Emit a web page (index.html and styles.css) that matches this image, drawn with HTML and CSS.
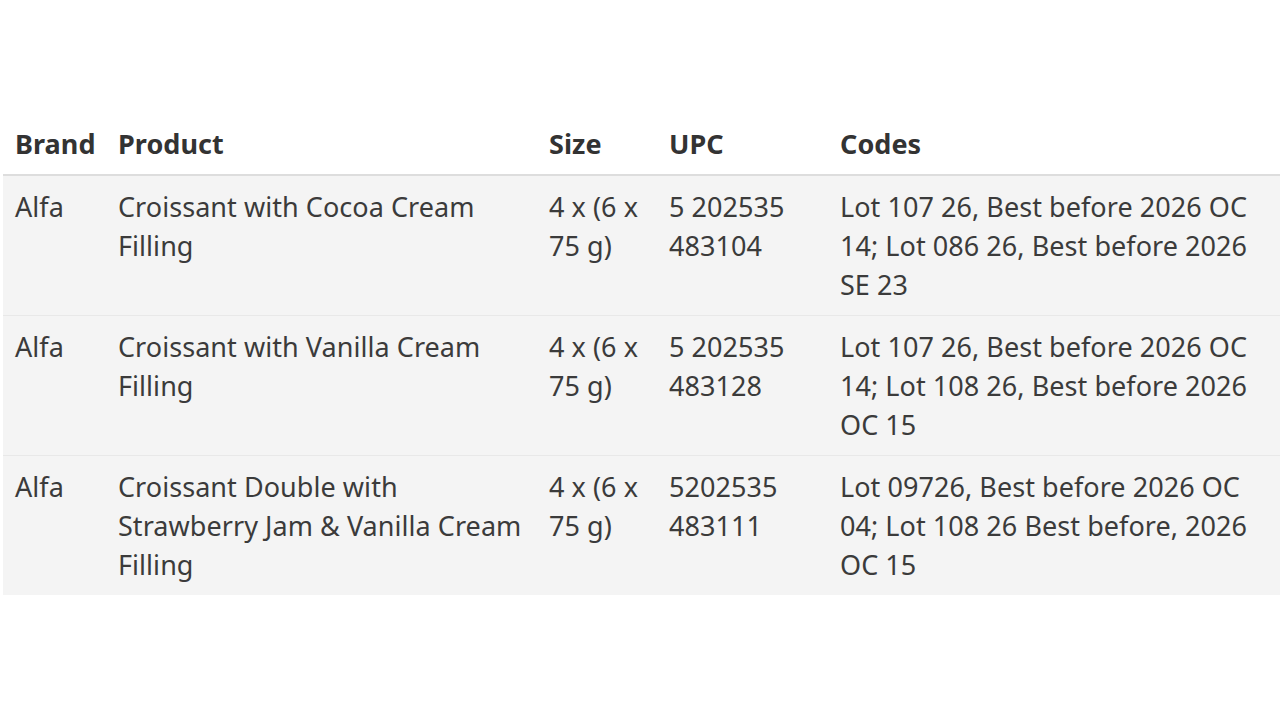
FILE: index.html
```html
<!DOCTYPE html>
<html lang="en">
<head>
<meta charset="utf-8">
<title>Recall table</title>
<link rel="stylesheet" href="styles.css">
</head>
<body>
<table class="recall">
  <colgroup>
    <col class="c-brand">
    <col class="c-product">
    <col class="c-size">
    <col class="c-upc">
    <col class="c-codes">
  </colgroup>
  <thead>
    <tr>
      <th>Brand</th>
      <th>Product</th>
      <th>Size</th>
      <th>UPC</th>
      <th class="last">Codes</th>
    </tr>
  </thead>
  <tbody>
    <tr>
      <td>Alfa</td>
      <td>Croissant with Cocoa Cream Filling</td>
      <td>4 x (6 x 75 g)</td>
      <td>5 202535 483104</td>
      <td class="last">Lot 107 26, Best before 2026 OC 14; Lot 086 26, Best before 2026 SE 23</td>
    </tr>
    <tr>
      <td>Alfa</td>
      <td>Croissant with Vanilla Cream Filling</td>
      <td>4 x (6 x 75 g)</td>
      <td>5 202535 483128</td>
      <td class="last">Lot 107 26, Best before 2026 OC 14; Lot 108 26, Best before 2026 OC 15</td>
    </tr>
    <tr>
      <td>Alfa</td>
      <td>Croissant Double with Strawberry Jam &amp; Vanilla Cream Filling</td>
      <td>4 x (6 x 75 g)</td>
      <td>5202535 483111</td>
      <td class="last">Lot 09726, Best before 2026 OC 04; Lot 108 26 Best before, 2026 OC 15</td>
    </tr>
  </tbody>
</table>
</body>
</html>
```

FILE: styles.css
```css
html, body {
  margin: 0;
  padding: 0;
  background: #ffffff;
}

body {
  font-family: "Noto Sans", "Open Sans", sans-serif;
  font-size: 27px;
  letter-spacing: 0.05px;
  line-height: 39px;
  color: #333333;
  padding-top: 110px;
  padding-left: 3px;
  overflow: hidden;
}

.recall {
  border-collapse: collapse;
  table-layout: fixed;
  width: 1280px;
}

.c-brand { width: 103px; }
.c-product { width: 431px; }
.c-size { width: 120px; }
.c-upc { width: 171px; }
.c-codes { width: 455px; }

.recall th,
.recall td {
  text-align: left;
  vertical-align: top;
  padding: 12px 10px 12px 12px;
}

.recall .last {
  padding-right: 18px;
}

.recall th {
  font-weight: 700;
  color: #333333;
  border-bottom: 2px solid #dddddd;
  padding-top: 14px;
  padding-bottom: 11px;
}

.recall td {
  font-weight: 400;
  color: #3b3b3b;
  background: #f4f4f4;
  padding-top: 11px;
  padding-bottom: 11px;
  border-bottom: 1px solid #e8e8e8;
}

.recall tbody tr:last-child td {
  border-bottom: none;
}
```
